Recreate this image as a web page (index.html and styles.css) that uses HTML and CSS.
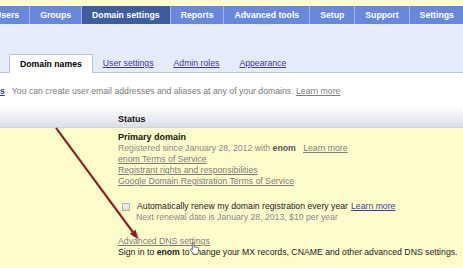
FILE: index.html
```html
<!DOCTYPE html>
<html lang="en">
<head>
    <meta charset="UTF-8">
    <title>Domain settings</title>
    <link rel="stylesheet" href="styles.css">
</head>
<body>
    <div class="nav">
        <a class="tab">Users</a>
        <a class="tab">Groups</a>
        <a class="tab active">Domain settings</a>
        <a class="tab">Reports</a>
        <a class="tab">Advanced tools</a>
        <a class="tab">Setup</a>
        <a class="tab">Support</a>
        <a class="tab">Settings</a>
    </div>
    <div class="subnav">
        <span class="subtab current">Domain names</span>
        <a class="subtab">User settings</a>
        <a class="subtab">Admin roles</a>
        <a class="subtab">Appearance</a>
    </div>
    <div class="intro">
        <a class="crumb">s</a><span class="hint">You can create user email addresses and aliases at any of your domains.</span>
        <a class="muted">Learn more</a>
    </div>
    <div class="tableHead">
        <span class="colStatus">Status</span>
    </div>
    <div class="row">
        <div class="status">
            <p class="primary">Primary domain</p>
            <p class="grey">Registered since January 28, 2012 with <b>enom</b> <a class="muted more">Learn more</a></p>
            <p><a class="muted">enom Terms of Service</a></p>
            <p><a class="muted">Registrant rights and responsibilities</a></p>
            <p><a class="muted">Google Domain Registration Terms of Service</a></p>

            <p class="renew"><span class="check"></span>Automatically renew my domain registration every year <a class="link">Learn more</a></p>
            <p class="grey next">Next renewal date is January 28, 2013, $10 per year</p>

            <p class="dns"><a class="muted">Advanced DNS settings</a></p>
            <p>Sign in to <b>enom</b> to change your MX records, CNAME and other advanced DNS settings.</p>
        </div>
    </div>

    <svg class="arrow" width="463" height="268" viewBox="0 0 463 268">
        <g opacity="0.35" transform="translate(2 2)">
            <line x1="56" y1="128" x2="132.6" y2="231.8" stroke="#666" stroke-width="2.4"/>
            <polygon points="138,239 129.8,233.8 135.5,229.7" fill="#666"/>
        </g>
        <line x1="56" y1="128" x2="132.6" y2="231.8" stroke="#8e1b1b" stroke-width="2"/>
        <polygon points="138,239 129.8,233.8 135.5,229.7" fill="#8e1b1b"/>
    </svg>
    <svg class="cursor" width="10" height="13" viewBox="0 0 12 15">
        <path d="M4 1.5a1 1 0 0 1 2 0V6h.2a1 1 0 0 1 1.8.3 1 1 0 0 1 1.8.3 1 1 0 0 1 1.7.6V11c0 2-1.2 3.5-3 3.5H6.8c-1 0-1.8-.5-2.4-1.4L2 9.6a1 1 0 0 1 1.6-1.2L4 9z" fill="#fff" stroke="#333" stroke-width="0.8"/>
    </svg>
</body>
</html>
```

FILE: styles.css
```css
*{
    box-sizing: border-box;
    margin: 0;
    padding: 0;
}
html{
    background: #fffccc;
}
body{
    font-family: 'Liberation Sans', Arial, sans-serif;
    font-size: 8.7px;
    color: #222;
    width: 463px;
    height: 268px;
    overflow: hidden;
    position: relative;
    background: #fffccc;
}
a{
    cursor: pointer;
}
.nav{
    display: flex;
    margin-top: 6px;
    margin-left: -15px;
    height: 18px;
    background: #6889db;
    white-space: nowrap;
}
.tab{
    padding: 0 10px;
    line-height: 18px;
    color: #fff;
    font-weight: bold;
    border-right: 1px solid #a3b6ea;
}
.tab.active{
    background: #3e5c9f;
}
.subnav{
    display: flex;
    align-items: flex-end;
    height: 49px;
    padding-left: 9px;
    background: #e6ebfa;
    border-bottom: 1px solid #b7c3e4;
}
.subtab{
    padding: 0 10px;
    line-height: 17px;
    color: #3a3a9c;
    text-decoration: underline;
}
.subtab.current{
    background: #fff;
    color: #000;
    font-weight: bold;
    text-decoration: none;
    border: 1px solid #b7c3e4;
    border-bottom: none;
    margin-bottom: -1px;
    line-height: 18px;
}
.intro{
    height: 27px;
    padding-top: 13px;
    line-height: 11px;
    background: #fff;
    white-space: nowrap;
}
.crumb{
    color: #3a3a9c;
    font-weight: bold;
    text-decoration: underline;
    margin-right: 7px;
}
.hint{
    color: #7a7a7a;
}
.muted{
    color: #7d7d7d;
    text-decoration: underline;
}
.link{
    color: #3a3aa8;
    text-decoration: underline;
}
.tableHead{
    height: 28px;
    padding: 14px 0 0 118px;
    line-height: 11px;
    background: linear-gradient(#fff 0%, #fff 20%, #dcdfe6 100%);
    border-bottom: 1px solid #cfd2d8;
}
.colStatus{
    font-weight: bold;
    font-size: 9px;
    color: #111;
}
.row{
    padding: 4px 0 0 118px;
}
.status p{
    line-height: 11px;
    white-space: nowrap;
}
.status .primary{
    font-weight: bold;
    font-size: 9px;
    color: #111;
}
.grey{
    color: #8a8a8a;
}
.grey b{
    color: #555;
}
.more{
    margin-left: 5px;
}
.renew{
    margin-top: 14px;
    display: flex;
    align-items: center;
}
.renew .link{
    margin-left: 3px;
}
.check{
    width: 8px;
    height: 8px;
    margin: 0 7px 0 4px;
    border: 1px solid #b4b4b4;
    background: linear-gradient(#f4f4f4, #d8d8d8);
}
.next{
    padding-left: 18px;
}
.dns{
    margin-top: 13px;
}
.arrow{
    position: absolute;
    left: 0;
    top: 0;
    pointer-events: none;
}
.cursor{
    position: absolute;
    left: 189px;
    top: 242px;
}
```
